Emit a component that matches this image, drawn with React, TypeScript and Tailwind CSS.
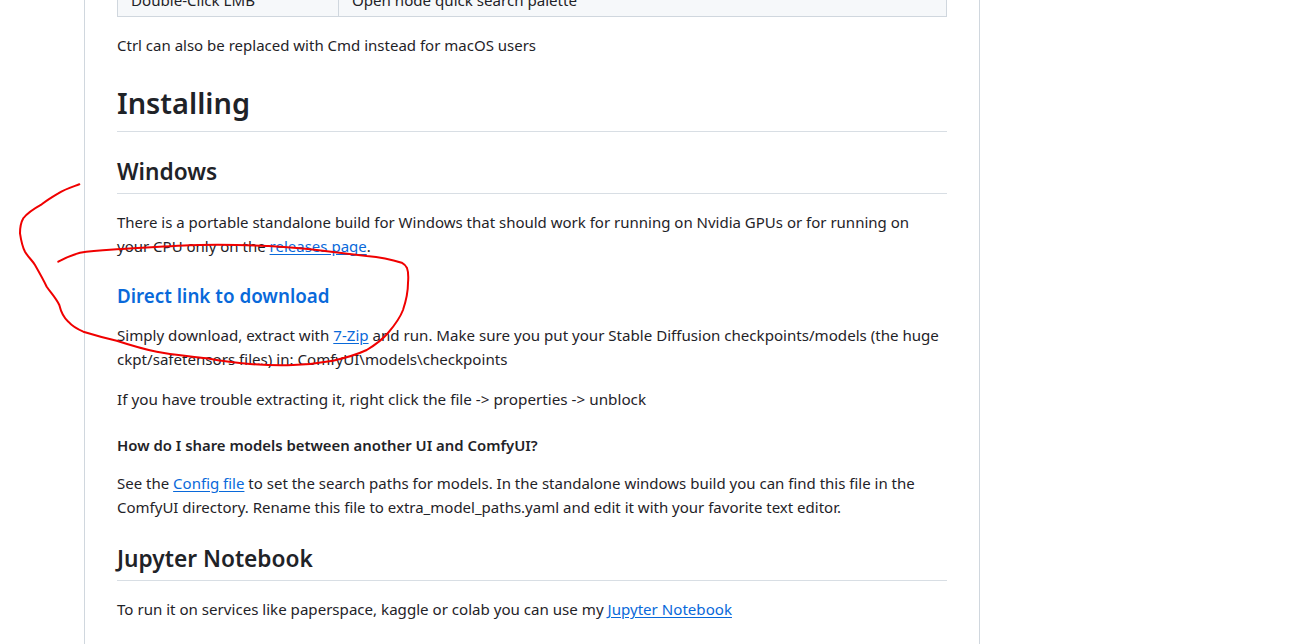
const SCRIBBLE =
  'M79.3 184.3 C72 187 65 189 58.3 193.3 C52 197 47 200 41.7 204.3 C35 208 27 213 23.3 218.3 C20 224 20 228 20 233.3 C21 240 22 246 25 251.7 C28 257 32 260 35 265 C39 272 43 279 46.7 286.7 C51 293 56 298 59.3 305 C61 312 63 317 68.3 321.7 C72 326 77 329 83.3 331.7 C94 335 105 338 116.7 340.7 C130 345 143 349 156.7 351.7 C173 355 190 356 206.7 358.3 C221 361 235 363 250 364 C264 365 279 365.5 293 365 C307 364.5 320 363 333 360.7 C345 358 356 355 366.7 350 C375 345 382 340 388 333 C394 326 400 318 403 310 C406 301 408 292 408 283 C408.5 277 408.5 272 407 268 C405.5 265 404 264 401.7 262.7 C390 259 378 257 366.7 256 C350 254 333 252 316.7 250 C300 248 283 247 266.7 246 C245 245 222 244.5 200 245 C172 245.5 144 248 116.7 249.3 C104 250 92 250.5 80 252.7 C72 255 65 258 58.3 261.7'

function H2({ children }: { children: React.ReactNode }) {
  return <h2 className="mt-[25px] mb-4 pb-1.5 border-b border-[#d8dee4] text-[22.7px] leading-[30px] font-semibold">{children}</h2>
}

function A({ children }: { children: React.ReactNode }) {
  return <a className="text-[#0969da] underline underline-offset-2">{children}</a>
}

export default function App() {
  return (
    <div className="relative h-[644px] overflow-hidden bg-white text-[#1f2328] font-['Noto_Sans',sans-serif] text-[15.1px] leading-6">
      <div className="flow-root ml-[84px] w-[896px] h-full border-x border-[#d0d7de] px-8">
        <table className="-mt-[17px] w-full border-collapse">
          <tbody>
            <tr className="bg-[#f6f8fa]">
              <td className="w-[221px] h-[33px] border border-[#d0d7de] px-[13px]">Double-Click LMB</td>
              <td className="border border-[#d0d7de] px-[13px]">Open node quick search palette</td>
            </tr>
          </tbody>
        </table>

        <p className="mt-4 text-[15px]">Ctrl can also be replaced with Cmd instead for macOS users</p>

        <h1 className="mt-[26px] mb-4 pb-2 border-b border-[#d8dee4] text-[28.9px] leading-10 font-semibold">Installing</h1>

        <H2>Windows</H2>
        <p className="text-[15px]">
          There is a portable standalone build for Windows that should work for running on Nvidia GPUs or for running on
          <br />
          your CPU only on the <A>releases page</A>.
        </p>

        <h3 className="mt-[26px] mb-3.5 text-[18.8px] leading-[25px] font-semibold text-[#0969da]">Direct link to download</h3>
        <p>
          Simply download, extract with <A>7-Zip</A> and run. Make sure you put your Stable Diffusion checkpoints/models
          (the huge ckpt/safetensors files) in: ComfyUI\models\checkpoints
        </p>
        <p className="mt-4 text-[15.25px]">If you have trouble extracting it, right click the file -&gt; properties -&gt; unblock</p>

        <h4 className="mt-[22px] mb-3.5 text-[14.9px] font-semibold">How do I share models between another UI and ComfyUI?</h4>
        <p className="text-[15px]">
          See the <A>Config file</A> to set the search paths for models. In the standalone windows build you can find
          this file in the ComfyUI directory. Rename this file to extra_model_paths.yaml and edit it with your favorite
          text editor.
        </p>

        <H2>Jupyter Notebook</H2>
        <p>
          To run it on services like paperspace, kaggle or colab you can use my <A>Jupyter Notebook</A>
        </p>
      </div>

      {/* hand drawn annotation on top of the page */}
      <svg className="absolute left-0 top-0 pointer-events-none" width="1315" height="644" fill="none">
        <path d={SCRIBBLE} stroke="#f00000" strokeWidth="2" strokeLinecap="round" strokeLinejoin="round" />
      </svg>
    </div>
  )
}
